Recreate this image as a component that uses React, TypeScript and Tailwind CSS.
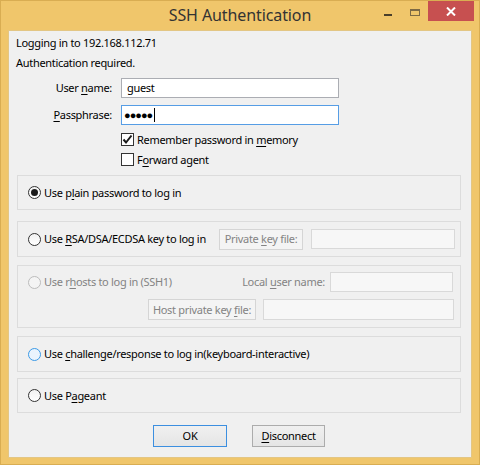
import React from "react";

const U = ({ children }: { children: React.ReactNode }) => (
  <span className="underline underline-offset-[2px] decoration-1">{children}</span>
);

function Radio({ checked = false, disabled = false, hover = false }: { checked?: boolean; disabled?: boolean; hover?: boolean }) {
  const ring = disabled
    ? "border-[#bcbcbc] bg-[#f4f4f4]"
    : hover
    ? "border-[#3c9ae6] bg-[#eaf4fd]"
    : "border-[#333333] bg-gradient-to-b from-[#f2f2f2] to-[#ffffff]";
  return (
    <div className={`w-[13px] h-[13px] rounded-full border flex items-center justify-center shrink-0 ${ring}`}>
      {checked && <div className="w-[7px] h-[7px] rounded-full bg-[#1a1a1a]" />}
    </div>
  );
}

function Checkbox({ checked = false }: { checked?: boolean }) {
  return (
    <div className="w-[13px] h-[13px] border border-[#333333] bg-white flex items-center justify-center shrink-0">
      {checked && (
        <svg width="11" height="11" viewBox="0 0 11 11">
          <path d="M1.5 5.5 L4 8.5 L9.5 1.5" fill="none" stroke="#1a1a1a" strokeWidth="2" />
        </svg>
      )}
    </div>
  );
}

function DisabledBox({ children, w }: { children: React.ReactNode; w: string }) {
  return (
    <div className={`${w} h-[21px] border border-[#d5d5d5] bg-[#f4f4f4] text-[#838383] flex items-center justify-center shrink-0`}>
      <span className="whitespace-nowrap">{children}</span>
    </div>
  );
}

function DisabledInput({ w, h = "h-[20px]" }: { w: string; h?: string }) {
  return <div className={`${w} ${h} border border-[#d9d9d9] bg-[#f7f7f7] shrink-0`} />;
}

export default function App() {
  return (
    <div className="w-[480px] h-[465px] bg-[#f0c66b] border border-[#d9ad52] flex flex-col font-['Segoe_UI','Noto_Sans',sans-serif] text-[11px] tracking-[-0.3px] leading-[16px] text-black select-none overflow-hidden whitespace-nowrap">
      {/* Title bar */}
      <div className="relative h-[29px] shrink-0 flex items-center justify-center">
        <span className="text-[16px] tracking-[-0.1px] leading-[20px] text-[#333333] mt-[-1px]">SSH Authentication</span>
        <div className="absolute right-[5px] top-0 flex items-start">
          <div className="w-[26px] h-[20px] flex items-center justify-center">
            <div className="w-[8px] h-[2px] bg-[#4a3f2a] mt-[8px]" />
          </div>
          <div className="w-[27px] h-[20px] flex items-center justify-center">
            <div className="w-[10px] h-[7px] border border-t-2 border-[#7d6a45] mt-[2px]" />
          </div>
          <div className="w-[46px] h-[20px] bg-[#c75050] flex items-center justify-center">
            <svg width="10" height="9" viewBox="0 0 10 9">
              <path d="M1 0.5 L9 8.5 M9 0.5 L1 8.5" stroke="#ffffff" strokeWidth="2" />
            </svg>
          </div>
        </div>
      </div>

      {/* Client area */}
      <div className="ml-[7px] w-[464px] h-[428px] border border-[#e3c684] bg-[#f0f0f0] flex flex-col pt-[4px]">
        <div className="ml-[7px] h-[16px]">Logging in to 192.168.112.71</div>
        <div className="ml-[7px] mt-[4px] h-[16px]">Authentication required.</div>

        <div className="mt-[7px] flex items-center h-[20px]">
          <div className="w-[103px] text-right">
            User <U>n</U>ame:
          </div>
          <div className="ml-[9px] w-[218px] h-[20px] border border-[#abadb3] bg-white flex items-center pl-[5px]">guest</div>
        </div>
        <div className="mt-[7px] flex items-center h-[20px]">
          <div className="w-[103px] text-right">
            <U>P</U>assphrase:
          </div>
          <div className="ml-[9px] w-[218px] h-[20px] border border-[#569de5] bg-white flex items-center pl-[2px]">
            <span className="text-[11px] tracking-[-1px]">●●●●●</span>
            <div className="w-[1px] h-[14px] bg-black ml-[2px]" />
          </div>
        </div>

        <div className="mt-[8px] ml-[112px] h-[13px] flex items-center gap-[3px]">
          <Checkbox checked />
          <span>
            Remember password in <U>m</U>emory
          </span>
        </div>
        <div className="mt-[7px] ml-[112px] h-[13px] flex items-center gap-[3px]">
          <Checkbox />
          <span>
            F<U>o</U>rward agent
          </span>
        </div>

        {/* Group 1 */}
        <div className="mt-[9px] ml-[8px] w-[444px] h-[35px] border border-[#dcdcdc] flex items-center pl-[10px] gap-[3px]">
          <Radio checked />
          <span>
            Use p<U>l</U>ain password to log in
          </span>
        </div>

        {/* Group 2 */}
        <div className="mt-[11px] ml-[8px] w-[444px] h-[36px] border border-[#dcdcdc] flex items-center pl-[10px] pr-[5px]">
          <Radio />
          <span className="ml-[3px]">
            Use <U>R</U>SA/DSA/ECDSA key to log in
          </span>
          <div className="ml-auto flex items-center gap-[8px]">
            <DisabledBox w="w-[84px]">
              Private <U>k</U>ey file:
            </DisabledBox>
            <DisabledInput w="w-[144px]" />
          </div>
        </div>

        {/* Group 3 (disabled) */}
        <div className="mt-[8px] ml-[8px] w-[444px] h-[63px] border border-[#dcdcdc] flex flex-col pt-[6px] text-[#838383]">
          <div className="h-[20px] flex items-center pl-[10px] pr-[7px]">
            <Radio disabled />
            <span className="ml-[3px]">
              Use r<U>h</U>osts to log in (SSH1)
            </span>
            <span className="ml-auto">
              Local <U>u</U>ser name:
            </span>
            <div className="ml-[5px]">
              <DisabledInput w="w-[123px]" />
            </div>
          </div>
          <div className="mt-[7px] h-[21px] flex items-center justify-end pr-[6px] gap-[7px]">
            <DisabledBox w="w-[108px]">
              Host private key <U>f</U>ile:
            </DisabledBox>
            <DisabledInput w="w-[191px]" h="h-[21px]" />
          </div>
        </div>

        {/* Group 4 */}
        <div className="mt-[8px] ml-[8px] w-[444px] h-[36px] border border-[#dcdcdc] flex items-center pl-[10px] gap-[3px]">
          <Radio hover />
          <span>
            Use <U>c</U>hallenge/response to log in(keyboard-interactive)
          </span>
        </div>

        {/* Group 5 */}
        <div className="mt-[6px] ml-[8px] w-[444px] h-[35px] border border-[#dcdcdc] flex items-center pl-[10px] gap-[3px]">
          <Radio />
          <span>
            Use P<U>a</U>geant
          </span>
        </div>

        {/* Buttons */}
        <div className="mt-[12px] ml-[144px] flex gap-[25px]">
          <button className="w-[74px] h-[22px] border border-[#3c8fe0] bg-gradient-to-b from-[#f0f0f0] to-[#e5e5e5] flex items-center justify-center">
            OK
          </button>
          <button className="w-[73px] h-[22px] border border-[#acacac] bg-gradient-to-b from-[#f0f0f0] to-[#e5e5e5] flex items-center justify-center">
            <span>
              <U>D</U>isconnect
            </span>
          </button>
        </div>
      </div>
    </div>
  );
}
